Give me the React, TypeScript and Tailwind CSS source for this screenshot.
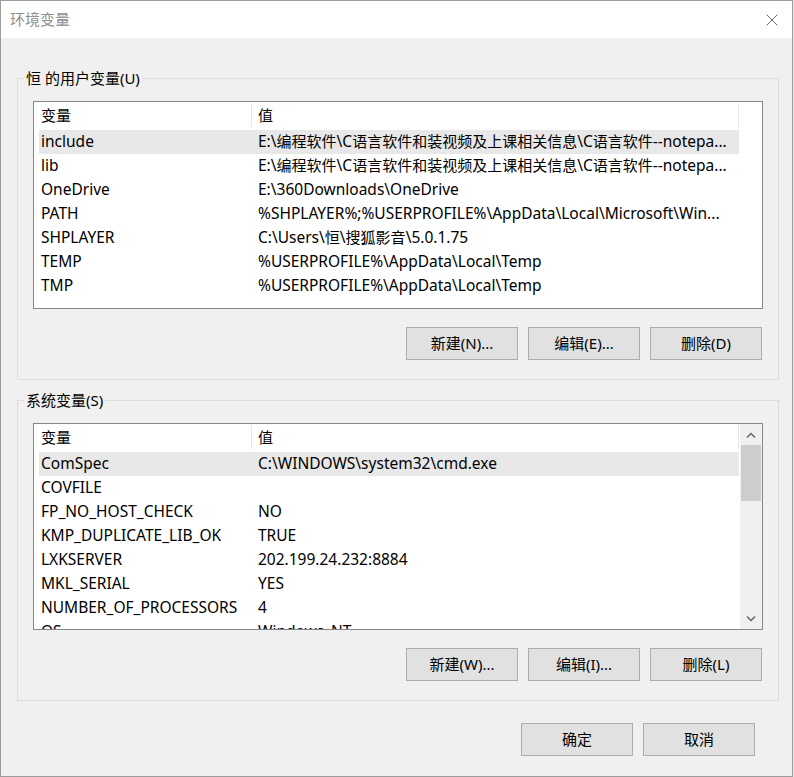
import React from "react";

type Row = { name: string; value: string };

const userVars: Row[] = [
  { name: "include", value: "E:\\编程软件\\C语言软件和装视频及上课相关信息\\C语言软件--notepa..." },
  { name: "lib", value: "E:\\编程软件\\C语言软件和装视频及上课相关信息\\C语言软件--notepa..." },
  { name: "OneDrive", value: "E:\\360Downloads\\OneDrive" },
  { name: "PATH", value: "%SHPLAYER%;%USERPROFILE%\\AppData\\Local\\Microsoft\\Win..." },
  { name: "SHPLAYER", value: "C:\\Users\\恒\\搜狐影音\\5.0.1.75" },
  { name: "TEMP", value: "%USERPROFILE%\\AppData\\Local\\Temp" },
  { name: "TMP", value: "%USERPROFILE%\\AppData\\Local\\Temp" },
];

const sysVars: Row[] = [
  { name: "ComSpec", value: "C:\\WINDOWS\\system32\\cmd.exe" },
  { name: "COVFILE", value: "" },
  { name: "FP_NO_HOST_CHECK", value: "NO" },
  { name: "KMP_DUPLICATE_LIB_OK", value: "TRUE" },
  { name: "LXKSERVER", value: "202.199.24.232:8884" },
  { name: "MKL_SERIAL", value: "YES" },
  { name: "NUMBER_OF_PROCESSORS", value: "4" },
  { name: "OS", value: "Windows_NT" },
];

const font = { fontFamily: '"Noto Sans", "Noto Sans CJK SC", sans-serif' };

// chinese runs come out a bit wide at 15.5px, so drop them to 15px
const Mixed = ({ text }: { text: string }) => (
  <>
    {text.split(/([\u4e00-\u9fff]+)/).map((part, i) =>
      /[\u4e00-\u9fff]/.test(part) ? (
        <span key={i} className="text-[15px]">
          {part}
        </span>
      ) : (
        <React.Fragment key={i}>{part}</React.Fragment>
      )
    )}
  </>
);

const WinButton = ({ label }: { label: string }) => (
  <button className="w-[112px] h-[33px] bg-[#e1e1e1] border border-[#adadad] text-[15px] text-black leading-none">
    {label}
  </button>
);

const ListView = ({ rows, scroll }: { rows: Row[]; scroll?: boolean }) => (
  <div className="flex border border-[#828790] bg-white h-full overflow-hidden">
    <div className="flex-1 min-w-0">
      {/* header */}
      <div className="flex h-[28px] pb-[2px] items-center text-[15px] text-black">
        <div className="w-[218px] h-[24px] pl-[7px] flex items-center border-r border-[#e5e5e5]">
          变量
        </div>
        <div className="w-[487px] h-[24px] pl-[6px] flex items-center border-r border-[#e5e5e5]">
          值
        </div>
      </div>
      {rows.map((r, i) => (
        <div
          key={r.name}
          className={`flex h-[24px] ml-[5px] w-[700px] items-center text-[15.5px] text-black whitespace-nowrap ${
            i === 0 ? "bg-[#e8e8e8]" : ""
          }`}
        >
          <div className="w-[213px] pl-[2px] overflow-hidden">{r.name}</div>
          <div className="flex-1 pl-[6px] overflow-hidden">
            <Mixed text={r.value} />
          </div>
        </div>
      ))}
    </div>
    {scroll && (
      <div className="w-[22px] flex flex-col bg-[#f0f0f0]">
        <div className="h-[21px] flex items-center justify-center">
          <svg width="10" height="6" viewBox="0 0 10 6">
            <path d="M1 5.5 L5 1.5 L9 5.5" fill="none" stroke="#606060" strokeWidth="1.4" />
          </svg>
        </div>
        <div className="h-[56px] mx-[1px] bg-[#cdcdcd]" />
        <div className="flex-1" />
        <div className="h-[21px] flex items-center justify-center">
          <svg width="10" height="6" viewBox="0 0 10 6">
            <path d="M1 0.5 L5 4.5 L9 0.5" fill="none" stroke="#606060" strokeWidth="1.4" />
          </svg>
        </div>
      </div>
    )}
  </div>
);

const Group = ({
  label,
  rows,
  buttons,
  scroll,
  listH,
  className,
}: {
  label: string;
  rows: Row[];
  buttons: string[];
  scroll?: boolean;
  listH: string;
  className: string;
}) => (
  <fieldset className={`ml-[16px] w-[762px] border border-[#dcdcdc] pb-[19px] ${className}`}>
    <legend className="ml-[6px] px-[2px] text-[15px] leading-[20px] text-black">{label}</legend>
    <div className={`ml-[15px] mt-[13px] w-[730px] ${listH}`}>
      <ListView rows={rows} scroll={scroll} />
    </div>
    <div className="flex justify-end gap-[10px] mt-[18px] mr-[16px]">
      {buttons.map((b) => (
        <WinButton key={b} label={b} />
      ))}
    </div>
  </fieldset>
);

export default function App() {
  return (
    <div className="w-[794px] h-[777px] bg-[#ecebe2]" style={font}>
      <div className="w-[793px] h-[777px] border border-[#9c9c9c] bg-[#f0f0f0] flex flex-col">
        {/* title bar */}
        <div className="h-[37px] bg-white flex items-center justify-between pl-[9px] pr-[14px]">
          <span className="text-[15px] text-[#8f8f8f]">环境变量</span>
          <svg width="12" height="12" viewBox="0 0 12 12">
            <path d="M0.5 0.5 L11.5 11.5 M11.5 0.5 L0.5 11.5" stroke="#6a6a6a" strokeWidth="1" />
          </svg>
        </div>

        <Group
          label="恒 的用户变量(U)"
          rows={userVars}
          buttons={["新建(N)...", "编辑(E)...", "删除(D)"]}
          listH="h-[208px]"
          className="mt-[30px]"
        />

        <Group
          label="系统变量(S)"
          rows={sysVars}
          buttons={["新建(W)...", "编辑(I)...", "删除(L)"]}
          scroll
          listH="h-[207px]"
          className="mt-[10px]"
        />

        <div className="flex justify-end gap-[10px] mt-[22px] mr-[37px]">
          <WinButton label="确定" />
          <WinButton label="取消" />
        </div>
      </div>
    </div>
  );
}
